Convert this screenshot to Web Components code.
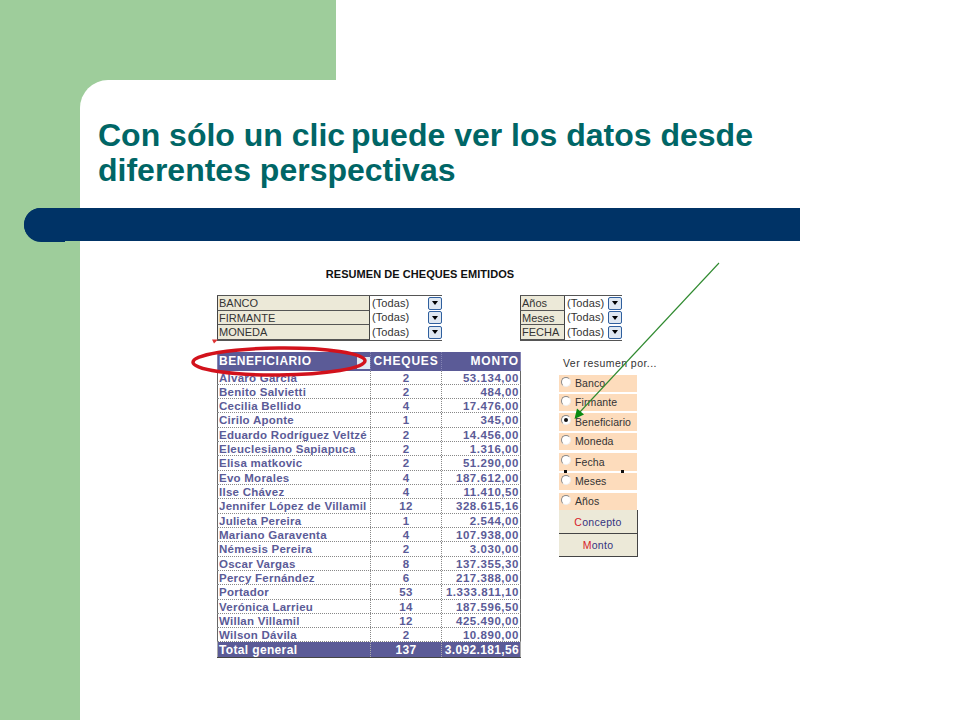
<!DOCTYPE html>
<html lang="es">
<head>
<meta charset="utf-8">
<title>Con sólo un clic</title>
<style>
  body { margin: 0; background: #fff; font-family: "Liberation Sans", Arial, sans-serif; }
</style>
</head>
<body>
<slide-frame>
  <span slot="title">Con sólo un clic <span style="margin-left:-3px">puede</span> ver los datos desde<br>diferentes perspectivas</span>
  <cheque-sheet></cheque-sheet>
</slide-frame>

<script>
(() => {
  const FILTERS_LEFT = [["BANCO", "(Todas)"], ["FIRMANTE", "(Todas)"], ["MONEDA", "(Todas)"]];
  const FILTERS_RIGHT = [["Años", "(Todas)"], ["Meses", "(Todas)"], ["FECHA", "(Todas)"]];

  const ROWS = [
    ["Alvaro García", "2", "53.134,00"],
    ["Benito Salvietti", "2", "484,00"],
    ["Cecilia Bellido", "4", "17.476,00"],
    ["Cirilo Aponte", "1", "345,00"],
    ["Eduardo Rodríguez Veltzé", "2", "14.456,00"],
    ["Eleuclesiano Sapiapuca", "2", "1.316,00"],
    ["Elisa matkovic", "2", "51.290,00"],
    ["Evo Morales", "4", "187.612,00"],
    ["Ilse Chávez", "4", "11.410,50"],
    ["Jennifer López de Villamil", "12", "328.615,16"],
    ["Julieta Pereira", "1", "2.544,00"],
    ["Mariano Garaventa", "4", "107.938,00"],
    ["Némesis Pereira", "2", "3.030,00"],
    ["Oscar Vargas", "8", "137.355,30"],
    ["Percy Fernández", "6", "217.388,00"],
    ["Portador", "53", "1.333.811,10"],
    ["Verónica Larrieu", "14", "187.596,50"],
    ["Willan Villamil", "12", "425.490,00"],
    ["Wilson Dávila", "2", "10.890,00"],
  ];

  const RADIOS = [
    { label: "Banco", h: 17, gap: 2 },
    { label: "Firmante", h: 17, gap: 2 },
    { label: "Beneficiario", h: 18, gap: 2, checked: true },
    { label: "Moneda", h: 17, gap: 3 },
    { label: "Fecha", h: 18, gap: 2 },
    { label: "Meses", h: 17, gap: 3 },
    { label: "Años", h: 17, gap: 0 },
  ];

  class SlideFrame extends HTMLElement {
    constructor() {
      super();
      this.attachShadow({ mode: "open" });
      this.shadowRoot.innerHTML = `
        <style>
          :host {
            display: block;
            width: 960px;
            height: 720px;
            overflow: hidden;
            background:
              linear-gradient(#9ecd9b, #9ecd9b) 0 0 / 336px 120px no-repeat,
              linear-gradient(#9ecd9b, #9ecd9b) 0 0 / 80px 100% no-repeat,
              #fff;
          }
          .main {
            margin: 80px 0 0 80px;
            height: 640px;
            background: #fff;
            border-top-left-radius: 28px;
          }
          h1 {
            margin: 0;
            padding: 38px 0 20px 18px;
            height: 70px;
            font: bold 32px/35px "Liberation Sans", Arial, sans-serif;
            color: #006666;
            white-space: nowrap;
          }
          .bar {
            position: relative;
            margin-left: -56px;
            width: 776px;
            height: 33px;
            background: #003366;
            border-radius: 17px 0 0 17px;
          }
          .bar::before {
            content: "";
            position: absolute;
            left: 0;
            top: 0;
            width: 41px;
            height: 34px;
            background: #003366;
            border-radius: 17px 0 0 17px;
          }
        </style>
        <div class="main">
          <h1><slot name="title"></slot></h1>
          <div class="bar"></div>
          <slot></slot>
        </div>
      `;
    }
  }

  class ChequeSheet extends HTMLElement {
    constructor() {
      super();
      this.attachShadow({ mode: "open" });
      this.shadowRoot.innerHTML = `
        <style>
          :host {
            display: block;
            position: relative;
            margin: 26px 0 0 137px;
            width: 421px;
            font-family: "Liberation Sans", Arial, sans-serif;
          }
          .heading {
            font: bold 11px/14px "Liberation Sans", Arial, sans-serif;
            letter-spacing: 0.05px;
            color: #111;
            width: 188px;
            margin-left: 109px;
            white-space: nowrap;
            display: flex;
            justify-content: center;
          }
          .filters {
            display: flex;
            justify-content: space-between;
            width: 405px;
            margin-top: 14px;
          }
          .lower {
            display: flex;
            margin-top: 11px;
          }
          pivot-table { margin-right: 38px; }
          svg.overlay {
            position: absolute;
            left: -217px;
            top: -267px;
            width: 960px;
            height: 720px;
            pointer-events: none;
          }
        </style>
        <div class="heading">RESUMEN DE CHEQUES EMITIDOS</div>
        <div class="filters">
          <filter-table id="left" label-width="153" value-width="72"></filter-table>
          <filter-table id="right" label-width="45" value-width="57"></filter-table>
        </div>
        <div class="lower">
          <pivot-table></pivot-table>
          <radio-panel></radio-panel>
        </div>
        <svg class="overlay" viewBox="0 0 960 720" aria-hidden="true">
          <path d="M212 339.500h6l-4 4z" fill="#d33"/>
          <ellipse cx="279" cy="361.500" rx="86" ry="13.500" transform="rotate(-0.5 279 362)" fill="none" stroke="#d2121c" stroke-width="3.500"/>
          <line x1="719" y1="263" x2="579" y2="413" stroke="#2f8a2f" stroke-width="1.100"/>
          <path d="M574.500 419 L577 408.500 L584 414.500 Z" fill="#0a8a12"/>
          <rect x="564" y="470" width="3" height="3" fill="#111"/>
          <rect x="621" y="470" width="3" height="3" fill="#111"/>
        </svg>
      `;
      this.shadowRoot.getElementById("left").rows = FILTERS_LEFT;
      this.shadowRoot.getElementById("right").rows = FILTERS_RIGHT;
    }
  }

  class FilterTable extends HTMLElement {
    constructor() {
      super();
      this.attachShadow({ mode: "open" });
    }

    set rows(list) {
      const lw = this.getAttribute("label-width");
      const vw = this.getAttribute("value-width");
      this.shadowRoot.innerHTML = `
        <style>
          :host { display: block; }
          .grid {
            display: grid;
            grid-template-columns: ${lw}px ${vw}px;
            grid-auto-rows: 14.500px;
            border-top: 1px solid #555;
            border-bottom: 1px solid #555;
            font: 11px/13px "Liberation Sans", Arial, sans-serif;
            color: #333;
          }
          .label {
            background: #ece9d8;
            border-left: 1px solid #444;
            border-right: 1px solid #444;
            border-bottom: 1px solid #555;
            padding-left: 1px;
            line-height: 15px;
            overflow: hidden;
          }
          .value {
            display: flex;
            align-items: center;
            justify-content: space-between;
            padding-left: 2px;
            letter-spacing: 0.1px;
          }
          .btn {
            display: flex;
            align-items: center;
            justify-content: center;
            width: 12px;
            height: 11px;
            background: #dfe8f2;
            border: 1px solid #2f5f9e;
            border-radius: 2px;
          }
          .btn::after {
            content: "";
            border-left: 3px solid transparent;
            border-right: 3px solid transparent;
            border-top: 4px solid #000;
          }
        </style>
        <div class="grid">
          ${list.map(([k, v]) => `
            <div class="label">${k}</div>
            <div class="value"><span>${v}</span><span class="btn"></span></div>
          `).join("")}
        </div>
      `;
    }
  }

  class PivotTable extends HTMLElement {
    constructor() {
      super();
      this.attachShadow({ mode: "open" });
      this.shadowRoot.innerHTML = `
        <style>
          :host {
            display: block;
            flex: none;
            width: 304px;
            font: bold 11.500px/14px "Liberation Sans", Arial, sans-serif;
            letter-spacing: 0.25px;
            color: #5b5b97;
          }
          .row {
            display: grid;
            grid-template-columns: 153px 71px 80px;
            height: 14.320px;
            box-sizing: border-box;
            border-bottom: 1px dotted #888;
            background: #fff;
            white-space: nowrap;
          }
          .cell {
            padding: 0 1px;
            overflow: hidden;
            line-height: 14.500px;
            border-left: 1px dotted #888;
          }
          .cell:first-child { border-left: 1px solid #666; }
          .cell:last-child { border-right: 1px solid #666; text-align: right; letter-spacing: 0.55px; }
          .cell:nth-child(2) { text-align: center; }
          .head, .total {
            background: #5b5b97;
            color: #fff;
            font-size: 12px;
            border-bottom: 0;
          }
          .head { height: 19px; }
          .head .cell { line-height: 18px; border-color: #8484b4; letter-spacing: 0.55px; }
          .head .cell:nth-child(n+2) { letter-spacing: 0.8px; }
          .total { height: 16px; border-bottom: 1px solid #444; }
          .total .cell { line-height: 16px; border-color: #aaa; letter-spacing: 0.35px; }
          .cell.menu { position: relative; }
          .cell.menu::after {
            content: "";
            position: absolute;
            right: 0;
            top: 5px;
            width: 13px;
            height: 12px;
            background: #dfe8f2;
          }
        </style>
        <div class="row head">
          <div class="cell menu">BENEFICIARIO</div>
          <div class="cell">CHEQUES</div>
          <div class="cell">MONTO</div>
        </div>
        ${ROWS.map(r => `
          <div class="row">${r.map(c => `<div class="cell">${c}</div>`).join("")}</div>
        `).join("")}
        <div class="row total">
          <div class="cell">Total general</div>
          <div class="cell">137</div>
          <div class="cell">3.092.181,56</div>
        </div>
      `;
    }
  }

  class RadioPanel extends HTMLElement {
    constructor() {
      super();
      this.attachShadow({ mode: "open" });
      this.shadowRoot.innerHTML = `
        <style>
          :host {
            display: block;
            flex: none;
            width: 79px;
            font: 10.500px/12px "Liberation Sans", Arial, sans-serif;
            color: #333;
          }
          .title {
            padding: 5px 0 6px 4px;
            height: 12px;
            white-space: nowrap;
            letter-spacing: 0.45px;
          }
          .radio {
            display: flex;
            align-items: center;
            gap: 4px;
            width: 78px;
            box-sizing: border-box;
            padding-left: 2px;
            background: #fddcbc;
            letter-spacing: 0.1px;
            white-space: nowrap;
          }
          .dot {
            flex: none;
            width: 10px;
            height: 10px;
            box-sizing: border-box;
            border-radius: 50%;
            background: #fff;
            border: 1px solid #888;
            border-right-color: #eee;
            border-bottom-color: #eee;
            margin-top: -3px;
            display: flex;
            align-items: center;
            justify-content: center;
          }
          .dot.on::after {
            content: "";
            width: 4px;
            height: 4px;
            border-radius: 50%;
            background: #111;
          }
          .btn {
            width: 79px;
            box-sizing: border-box;
            background: #ece9d8;
            border-right: 1px solid #444;
            border-bottom: 1px solid #444;
            text-align: center;
            color: #33337f;
            letter-spacing: 0.3px;
          }
          .btn b { font-weight: normal; color: #d6202a; }
          .b1 { height: 24px; line-height: 24px; }
          .b2 { height: 23px; line-height: 23px; }
        </style>
        <div class="title">Ver resumen por...</div>
        ${RADIOS.map(r => `
          <div class="radio" style="height:${r.h}px;margin-bottom:${r.gap}px">
            <span class="dot${r.checked ? " on" : ""}"></span><span>${r.label}</span>
          </div>
        `).join("")}
        <div class="btn b1"><b>C</b>oncepto</div>
        <div class="btn b2"><b>M</b>onto</div>
      `;
    }
  }

  customElements.define("filter-table", FilterTable);
  customElements.define("pivot-table", PivotTable);
  customElements.define("radio-panel", RadioPanel);
  customElements.define("cheque-sheet", ChequeSheet);
  customElements.define("slide-frame", SlideFrame);
})();
</script>
</body>
</html>
